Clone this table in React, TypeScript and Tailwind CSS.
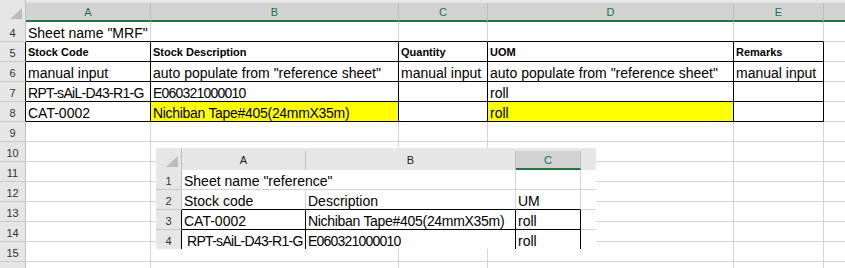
import React from 'react';
import clsx from 'clsx';

type Cell = { t?: string; bold?: boolean; fill?: boolean; rb?: boolean; bb?: boolean; tight?: 'code' | 'digits' | 'desc'; indent?: boolean };
type Row = { n: number; label?: boolean; hb?: boolean; cells: Cell[] };

// main sheet column widths (right border included)
const MAIN_W = ['w-[125px]', 'w-[248px]', 'w-[89px]', 'w-[246px]', 'w-[90px]'];
const MAIN_LETTERS = ['A', 'B', 'C', 'D', 'E'];

const AUTO = 'auto populate from "reference sheet"';
const TAPE = 'Nichiban Tape#405(24mmX35m)';

const tableRow = (cells: Cell[]): Cell[] => cells.map((c) => ({ ...c, rb: true, bb: true }));

const mrfRows: Row[] = [
  { n: 4, cells: [{ t: 'Sheet name "MRF"', bb: true }, { bb: true }, { bb: true }, { bb: true }, { bb: true }] },
  {
    n: 5,
    hb: true,
    cells: tableRow([
      { t: 'Stock Code', bold: true },
      { t: 'Stock Description', bold: true },
      { t: 'Quantity', bold: true },
      { t: 'UOM', bold: true },
      { t: 'Remarks', bold: true },
    ]),
  },
  { n: 6, hb: true, cells: tableRow([{ t: 'manual input' }, { t: AUTO }, { t: 'manual input' }, { t: AUTO }, { t: 'manual input' }]) },
  { n: 7, hb: true, cells: tableRow([{ t: 'RPT-sAiL-D43-R1-G', tight: 'code' }, { t: 'E060321000010', tight: 'digits' }, {}, { t: 'roll' }, {}]) },
  {
    n: 8,
    hb: true,
    cells: tableRow([{ t: 'CAT-0002' }, { t: TAPE, fill: true, tight: 'desc' }, {}, { t: 'roll', fill: true }, {}]),
  },
  ...[9, 10, 11, 12, 13, 14, 15].map((n) => ({ n, cells: [{}, {}, {}, {}, {}] })),
  // row 16 only peeks in at the bottom edge, its number is below the fold
  { n: 16, label: false, cells: [{}, {}, {}, {}, {}] },
];

// pasted picture of the "reference" sheet
const REF_W = ['w-[124px]', 'w-[210px]', 'w-[65px]'];

const refRows: Row[] = [
  { n: 2, cells: [{ t: 'Stock code', bb: true }, { t: 'Description', bb: true }, { t: 'UM', bb: true }] },
  { n: 3, hb: true, cells: tableRow([{ t: 'CAT-0002' }, { t: TAPE, tight: 'desc' }, { t: 'roll' }]) },
  {
    n: 4,
    hb: true,
    cells: tableRow([{ t: 'RPT-sAiL-D43-R1-G', indent: true, tight: 'code' }, { t: 'E060321000010', tight: 'digits' }, { t: 'roll' }]),
  },
];

const Corner = () => (
  <div className="flex h-full w-[26px] shrink-0 items-end justify-end border-r border-r-[#bfbfbf] bg-[#e6e6e6] pr-[3px] pb-[3px]">
    <svg width="12" height="11" viewBox="0 0 12 11">
      <polygon points="12,0 12,11 0,11" fill="#bcbcbc" />
    </svg>
  </div>
);

const SheetCell = ({ w, c }: { w: string; c: Cell }) => (
  <div
    className={clsx(
      'flex h-full shrink-0 items-end overflow-hidden whitespace-nowrap border-r border-b leading-[16px] text-black',
      w,
      c.rb ? 'border-r-black' : 'border-r-[#d4d4d4]',
      c.bb ? 'border-b-black' : 'border-b-[#d4d4d4]',
      c.fill && 'bg-[#ffff00]',
      c.bold ? 'pb-[1px] text-[11px] font-bold' : 'text-[14px]',
      c.indent ? 'pl-[5px]' : 'pl-[2px]',
      c.tight === 'code' && 'tracking-[-0.7px]',
      c.tight === 'digits' && 'tracking-[-0.8px]',
      c.tight === 'desc' && 'tracking-[-0.3px]'
    )}
  >
    {c.t}
  </div>
);

const RowHead = ({ n, dark, label = true }: { n: number; dark?: boolean; label?: boolean }) => (
  <div
    className={clsx(
      'flex h-full w-[26px] shrink-0 items-end justify-center border-r border-b border-b-[#cacaca] bg-[#e6e6e6] text-[11px] leading-[16px] text-[#333]',
      dark ? 'border-r-black' : 'border-r-[#bfbfbf]'
    )}
  >
    {label && n}
  </div>
);

export default function App() {
  return (
    <div className="relative h-[268px] w-[845px] overflow-hidden bg-white font-['Liberation_Sans',Arial,sans-serif]">
      {/* column headers */}
      <div className="flex h-[22px] items-end bg-[#e6e6e6]">
        <Corner />
        {MAIN_LETTERS.map((l, i) => (
          <div
            key={l}
            className={clsx(
              'flex h-[19px] shrink-0 justify-center border-r border-b-2 border-r-[#bfbfbf] border-b-[#217346] bg-[#d2d2d2] pt-[2px] text-[11px] leading-[15px] text-[#217346]',
              MAIN_W[i]
            )}
          >
            {l}
          </div>
        ))}
        <div className="h-[19px] flex-1 border-b-2 border-b-[#217346] bg-[#d2d2d2]" />
      </div>

      {/* MRF sheet rows */}
      {mrfRows.map((r) => (
        <div key={r.n} className="flex h-[20px]">
          <RowHead n={r.n} dark={r.hb} label={r.label} />
          {r.cells.map((c, i) => (
            <SheetCell key={i} w={MAIN_W[i]} c={c} />
          ))}
          <div className="h-full flex-1 border-b border-b-[#d4d4d4]" />
        </div>
      ))}

      {/* screenshot of the "reference" sheet pasted over the grid */}
      <div className="absolute top-[148px] left-[156px] h-[101px] w-[440px] overflow-hidden bg-white">
        <div className="flex h-[22px] items-end bg-[#e6e6e6]">
          <Corner />
          {['A', 'B'].map((l, i) => (
            <div
              key={l}
              className={clsx(
                'flex h-[19px] shrink-0 justify-center border-r border-r-[#bfbfbf] pt-[2px] text-[11px] leading-[15px] text-[#222]',
                REF_W[i]
              )}
            >
              {l}
            </div>
          ))}
          <div className="flex h-[19px] w-[65px] shrink-0 justify-center border-r border-b-2 border-r-[#bfbfbf] border-b-[#217346] bg-[#d2d2d2] pt-[2px] text-[11px] leading-[15px] text-[#217346]">
            C
          </div>
          <div className="h-[19px] flex-1" />
        </div>

        <div className="flex h-[20px]">
          <RowHead n={1} />
          <div className="flex h-full w-[334px] shrink-0 items-end whitespace-nowrap border-r border-b border-[#d4d4d4] pl-[2px] text-[14px] leading-[16px] text-black">
            Sheet name "reference"
          </div>
          <SheetCell w={REF_W[2]} c={{}} />
          <div className="h-full flex-1 border-b border-b-[#d4d4d4]" />
        </div>

        {refRows.map((r) => (
          <div key={r.n} className="flex h-[20px]">
            <RowHead n={r.n} dark={r.hb} />
            {r.cells.map((c, i) => (
              <SheetCell key={i} w={REF_W[i]} c={c} />
            ))}
            <div className="h-full flex-1 border-b border-b-[#d4d4d4]" />
          </div>
        ))}
      </div>
    </div>
  );
}
